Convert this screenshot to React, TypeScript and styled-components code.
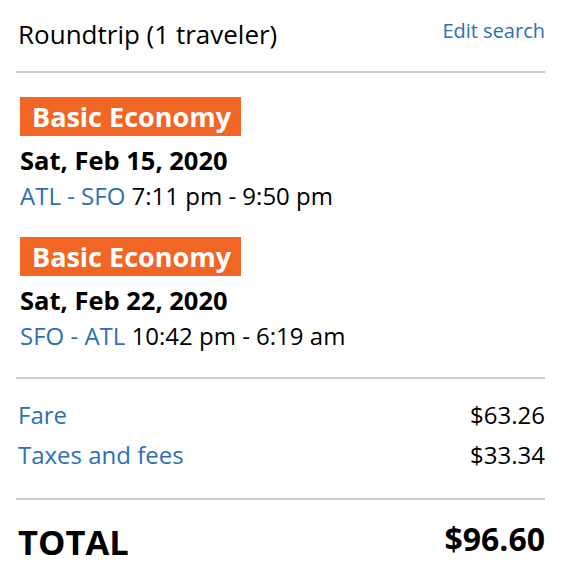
import React from "react"
import styled, { createGlobalStyle } from "styled-components"

const GlobalStyle = createGlobalStyle`
  html, body {
    margin: 0;
    padding: 0;
    background: #fff;
  }
  body {
    font-family: "Open Sans", "Liberation Sans", sans-serif;
    color: #000;
  }
`

const Summary = styled.div`
  width: 562px;
  padding: 0 17px 0 16px;
  box-sizing: border-box;
`

const Header = styled.div`
  display: flex;
  justify-content: space-between;
  align-items: flex-start;
  padding-top: 18px;
`

const Heading = styled.div`
  font-size: 26px;
  line-height: 32px;
  padding-left: 2px;
`

const EditLink = styled.a`
  margin-top: -1px;
  font-size: 20px;
  line-height: 28px;
  color: #2d6fb7;
  text-decoration: none;
  cursor: pointer;
`

const Divider = styled.hr<{ $top: number; $bottom: number }>`
  border: 0;
  height: 2px;
  background: #cccccc;
  margin: ${p => p.$top}px 0 ${p => p.$bottom}px;
`

const Segments = styled.div`
  display: flex;
  flex-direction: column;
  gap: 25px;
  padding-left: 4px;
`

const Segment = styled.div`
  display: flex;
  flex-direction: column;
  align-items: flex-start;
`

const Badge = styled.div`
  background: #f26625;
  color: #fff;
  font-weight: 700;
  font-size: 27px;
  line-height: 39px;
  padding: 0 10px 0 12px;
  margin-bottom: 8px;
`

const FlightDate = styled.div`
  font-weight: 700;
  font-size: 25.5px;
  line-height: 32px;
`

const Route = styled.div`
  margin-top: 4px;
  font-size: 24px;
  line-height: 32px;
`

const Airports = styled.span`
  color: #2d6fb7;
`

const Charges = styled.div`
  display: flex;
  flex-direction: column;
  gap: 8px;
`

const ChargeRow = styled.div`
  display: flex;
  justify-content: space-between;
  font-size: 24px;
  line-height: 32px;
  padding-left: 2px;
`

const ChargeLabel = styled.span`
  color: #2d6fb7;
`

const TotalRow = styled.div`
  display: flex;
  justify-content: space-between;
  align-items: baseline;
  font-weight: 700;
  line-height: 48px;
  padding-left: 2px;
`

const TotalLabel = styled.span`
  font-size: 34.5px;
`

const TotalAmount = styled.span`
  font-size: 32px;
  position: relative;
  top: -4px;
`

const flights = [
  { date: "Sat, Feb 15, 2020", route: "ATL - SFO", time: "7:11 pm - 9:50 pm" },
  { date: "Sat, Feb 22, 2020", route: "SFO - ATL", time: "10:42 pm - 6:19 am" },
]

const charges = [
  { label: "Fare", amount: "$63.26" },
  { label: "Taxes and fees", amount: "$33.34" },
]

const App = () => {
  return (
    <Summary>
      <GlobalStyle />
      <Header>
        <Heading>Roundtrip (1 traveler)</Heading>
        <EditLink>Edit search</EditLink>
      </Header>
      <Divider $top={21} $bottom={24} />
      <Segments>
        {flights.map((f, i) => (
          <Segment key={i}>
            <Badge>Basic Economy</Badge>
            <FlightDate>{f.date}</FlightDate>
            <Route>
              <Airports>{f.route}</Airports> {f.time}
            </Route>
          </Segment>
        ))}
      </Segments>
      <Divider $top={25} $bottom={20} />
      <Charges>
        {charges.map((c, i) => (
          <ChargeRow key={i}>
            <ChargeLabel>{c.label}</ChargeLabel>
            <span>{c.amount}</span>
          </ChargeRow>
        ))}
      </Charges>
      <Divider $top={27} $bottom={18} />
      <TotalRow>
        <TotalLabel>TOTAL</TotalLabel>
        <TotalAmount>$96.60</TotalAmount>
      </TotalRow>
    </Summary>
  )
}

export default App
